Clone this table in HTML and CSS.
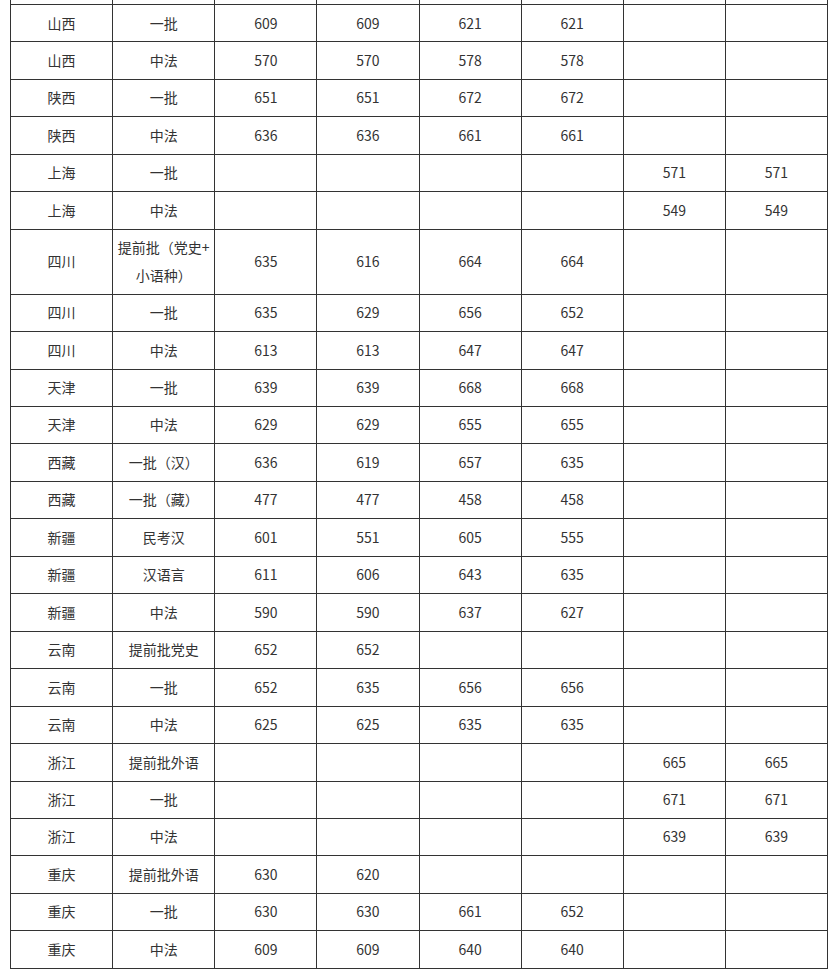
FILE: index.html
```html
<!DOCTYPE html>
<html lang="zh-CN">
<head>
<meta charset="utf-8">
<title>分数线</title>
<link rel="stylesheet" href="styles.css">
</head>
<body>
<table class="scores">
<colgroup>
<col><col><col><col><col><col><col><col>
</colgroup>
<tbody>
<tr class="prev"><td></td><td></td><td></td><td></td><td></td><td></td><td></td><td></td></tr>
<tr><td>山西</td><td>一批</td><td>609</td><td>609</td><td>621</td><td>621</td><td></td><td></td></tr>
<tr><td>山西</td><td>中法</td><td>570</td><td>570</td><td>578</td><td>578</td><td></td><td></td></tr>
<tr><td>陕西</td><td>一批</td><td>651</td><td>651</td><td>672</td><td>672</td><td></td><td></td></tr>
<tr><td>陕西</td><td>中法</td><td>636</td><td>636</td><td>661</td><td>661</td><td></td><td></td></tr>
<tr><td>上海</td><td>一批</td><td></td><td></td><td></td><td></td><td>571</td><td>571</td></tr>
<tr><td>上海</td><td>中法</td><td></td><td></td><td></td><td></td><td>549</td><td>549</td></tr>
<tr><td>四川</td><td>提前批（党史+<br>小语种）</td><td>635</td><td>616</td><td>664</td><td>664</td><td></td><td></td></tr>
<tr><td>四川</td><td>一批</td><td>635</td><td>629</td><td>656</td><td>652</td><td></td><td></td></tr>
<tr><td>四川</td><td>中法</td><td>613</td><td>613</td><td>647</td><td>647</td><td></td><td></td></tr>
<tr><td>天津</td><td>一批</td><td>639</td><td>639</td><td>668</td><td>668</td><td></td><td></td></tr>
<tr><td>天津</td><td>中法</td><td>629</td><td>629</td><td>655</td><td>655</td><td></td><td></td></tr>
<tr><td>西藏</td><td>一批（汉）</td><td>636</td><td>619</td><td>657</td><td>635</td><td></td><td></td></tr>
<tr><td>西藏</td><td>一批（藏）</td><td>477</td><td>477</td><td>458</td><td>458</td><td></td><td></td></tr>
<tr><td>新疆</td><td>民考汉</td><td>601</td><td>551</td><td>605</td><td>555</td><td></td><td></td></tr>
<tr><td>新疆</td><td>汉语言</td><td>611</td><td>606</td><td>643</td><td>635</td><td></td><td></td></tr>
<tr><td>新疆</td><td>中法</td><td>590</td><td>590</td><td>637</td><td>627</td><td></td><td></td></tr>
<tr><td>云南</td><td>提前批党史</td><td>652</td><td>652</td><td></td><td></td><td></td><td></td></tr>
<tr><td>云南</td><td>一批</td><td>652</td><td>635</td><td>656</td><td>656</td><td></td><td></td></tr>
<tr><td>云南</td><td>中法</td><td>625</td><td>625</td><td>635</td><td>635</td><td></td><td></td></tr>
<tr><td>浙江</td><td>提前批外语</td><td></td><td></td><td></td><td></td><td>665</td><td>665</td></tr>
<tr><td>浙江</td><td>一批</td><td></td><td></td><td></td><td></td><td>671</td><td>671</td></tr>
<tr><td>浙江</td><td>中法</td><td></td><td></td><td></td><td></td><td>639</td><td>639</td></tr>
<tr><td>重庆</td><td>提前批外语</td><td>630</td><td>620</td><td></td><td></td><td></td><td></td></tr>
<tr><td>重庆</td><td>一批</td><td>630</td><td>630</td><td>661</td><td>652</td><td></td><td></td></tr>
<tr><td>重庆</td><td>中法</td><td>609</td><td>609</td><td>640</td><td>640</td><td></td><td></td></tr>
</tbody>
</table>
</body>
</html>
```
FILE: styles.css
```css
html, body {
  margin: 0;
  padding: 0;
  background: #fff;
}
body {
  font-family: "Noto Sans CJK SC", "Microsoft YaHei", "Noto Sans", sans-serif;
  font-size: 14px;
  color: #333;
  overflow: hidden;
}
.scores {
  margin: -33.45px 0 0 10px;
  width: 818px;
  table-layout: fixed;
  border-collapse: collapse;
}
.scores td {
  border: 1px solid #333;
  padding: 4.5px 2px;
  line-height: 27.45px;
  text-align: center;
  vertical-align: middle;
  word-break: break-all;
}
.scores .prev td {
  height: 27.45px;
}
```
